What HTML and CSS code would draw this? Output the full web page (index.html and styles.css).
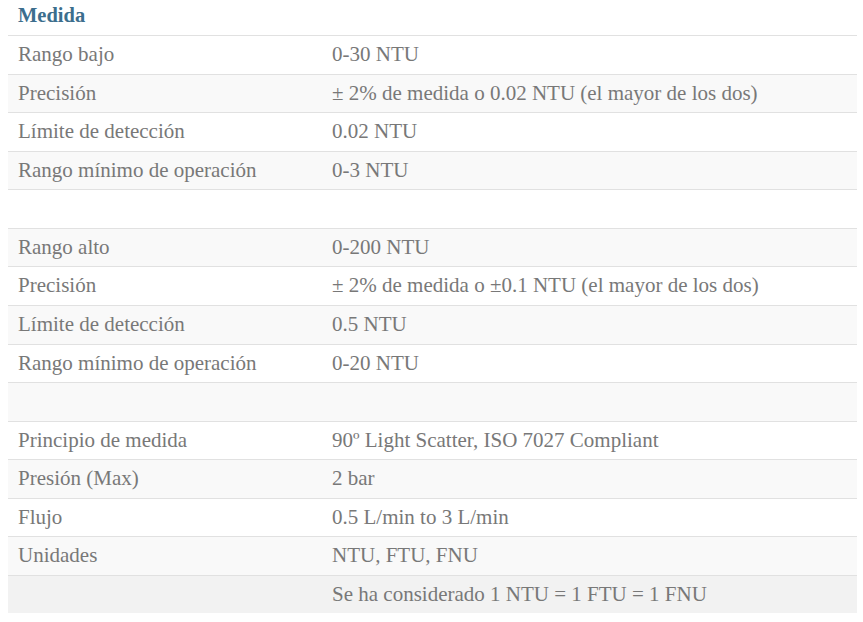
FILE: index.html
```html
<!DOCTYPE html>
<html lang="es">
<head>
<meta charset="utf-8">
<title>Medida</title>
<link rel="stylesheet" href="styles.css">
</head>
<body>
<table class="spec">
  <thead>
    <tr><th colspan="2" class="spec-title">Medida</th></tr>
  </thead>
  <tbody>
    <tr><td class="k">Rango bajo</td><td>0-30 NTU</td></tr>
    <tr><td class="k">Precisión</td><td>± 2% de medida o 0.02 NTU (el mayor de los dos)</td></tr>
    <tr><td class="k">Límite de detección</td><td>0.02 NTU</td></tr>
    <tr><td class="k">Rango mínimo de operación</td><td>0-3 NTU</td></tr>
    <tr><td class="k"></td><td></td></tr>
    <tr><td class="k">Rango alto</td><td>0-200 NTU</td></tr>
    <tr><td class="k">Precisión</td><td>± 2% de medida o ±0.1 NTU (el mayor de los dos)</td></tr>
    <tr><td class="k">Límite de detección</td><td>0.5 NTU</td></tr>
    <tr><td class="k">Rango mínimo de operación</td><td>0-20 NTU</td></tr>
    <tr><td class="k"></td><td></td></tr>
    <tr><td class="k">Principio de medida</td><td>90º Light Scatter, ISO 7027 Compliant</td></tr>
    <tr><td class="k">Presión (Max)</td><td>2 bar</td></tr>
    <tr><td class="k">Flujo</td><td>0.5 L/min to 3 L/min</td></tr>
    <tr><td class="k">Unidades</td><td>NTU, FTU, FNU</td></tr>
    <tr class="note"><td class="k"></td><td>Se ha considerado 1 NTU = 1 FTU = 1 FNU</td></tr>
  </tbody>
</table>
</body>
</html>
```
FILE: styles.css
```css
html, body {
  margin: 0;
  padding: 0;
  background: #ffffff;
}
body {
  padding: 0 6px 0 8px;
  font-family: "Liberation Serif", "Times New Roman", serif;
}
.spec {
  width: 849px;
  border-collapse: collapse;
  border-spacing: 0;
  font-size: 21px;
  color: #787878;
}
.spec-title {
  text-align: left;
  font-weight: bold;
  color: #3c6e8d;
  font-size: 20.5px;
  line-height: 22px;
  padding: 4px 10px 9px;
  border-bottom: 1px solid #e1e1e1;
}
.spec td {
  line-height: 28.57px;
  height: 28.57px;
  padding: 4px 10px 5px;
  border-top: 1px solid #e1e1e1;
  vertical-align: middle;
}
.spec td.k {
  width: 294px;
}
.spec tbody tr:nth-child(even) td {
  background: #f9f9f9;
}
.spec tbody tr.note td {
  background: #f2f2f2;
}
```
